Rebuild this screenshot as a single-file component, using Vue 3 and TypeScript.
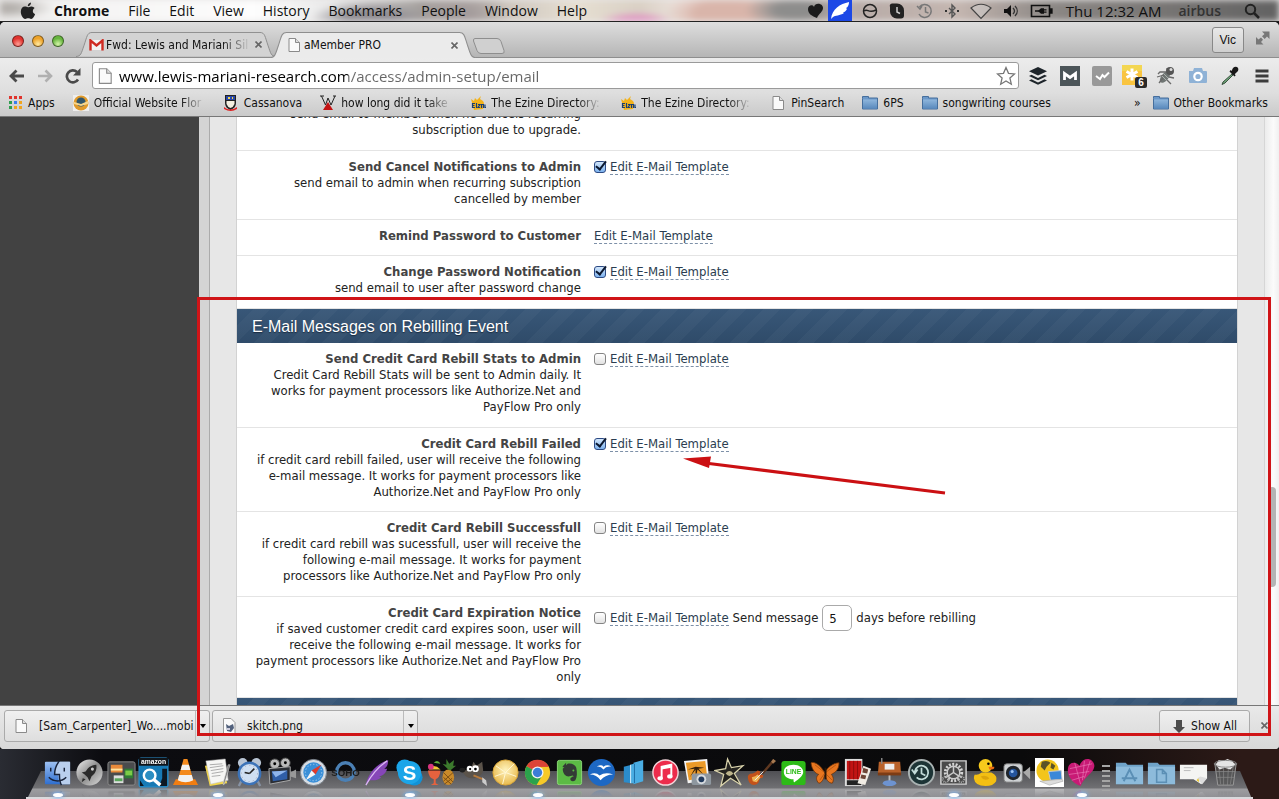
<script setup lang="ts">
import { reactive, ref } from 'vue'

interface Setting {
  id: string
  title: string
  note: string
  enabled?: boolean
  compact?: boolean
}

const menus = ['Chrome', 'File', 'Edit', 'View', 'History', 'Bookmarks', 'People', 'Window', 'Help']

const address = ref('www.lewis-mariani-research.com/access/admin-setup/email')

const general = reactive<Setting[]>([
  { id: 'upgrade', title: 'Send Cancel Notifications to User', note: 'send email to member when he cancels recurring\nsubscription due to upgrade.', enabled: true },
  { id: 'cancel', title: 'Send Cancel Notifications to Admin', note: 'send email to admin when recurring subscription\ncancelled by member', enabled: true },
  { id: 'remind', title: 'Remind Password to Customer', note: '', compact: true },
  { id: 'change', title: 'Change Password Notification', note: 'send email to user after password change', enabled: true },
])

const rebilling = reactive<Setting[]>([
  { id: 'stats', title: 'Send Credit Card Rebill Stats to Admin', note: 'Credit Card Rebill Stats will be sent to Admin daily. It\nworks for payment processors like Authorize.Net and\nPayFlow Pro only', enabled: false },
  { id: 'failed', title: 'Credit Card Rebill Failed', note: 'if credit card rebill failed, user will receive the following\ne-mail message. It works for payment processors like\nAuthorize.Net and PayFlow Pro only', enabled: true, compact: true },
  { id: 'success', title: 'Credit Card Rebill Successfull', note: 'if credit card rebill was sucessfull, user will receive the\nfollowing e-mail message. It works for payment\nprocessors like Authorize.Net and PayFlow Pro only', enabled: false },
  { id: 'expire', title: 'Credit Card Expiration Notice', note: 'if saved customer credit card expires soon, user will\nreceive the following e-mail message. It works for\npayment processors like Authorize.Net and PayFlow Pro\nonly', enabled: false },
])

const days = ref('5')
</script>

<template>
  <div class="desktop">
    <svg class="defs" width="0" height="0" aria-hidden="true">
      <defs>
        <linearGradient id="folder" x1="0" y1="0" x2="0" y2="1"><stop offset="0" stop-color="#8fb6dc" /><stop offset="1" stop-color="#5a8abd" /></linearGradient>
        <linearGradient id="bluebox" x1="0" y1="0" x2="0" y2="1"><stop offset="0" stop-color="#9cc0f2" /><stop offset="1" stop-color="#2f6fd0" /></linearGradient>
        <linearGradient id="steel" x1="0" y1="0" x2="1" y2="1"><stop offset="0" stop-color="#f2f2f2" /><stop offset=".5" stop-color="#8c8c8c" /><stop offset="1" stop-color="#dcdcdc" /></linearGradient>
        <radialGradient id="gold" cx=".5" cy=".4" r=".6"><stop offset="0" stop-color="#fff3bd" /><stop offset="1" stop-color="#e8b94c" /></radialGradient>
        <symbol id="doc" viewBox="0 0 16 16"><path d="M3 1.500h6.500l4 4v9H3z" fill="#fafafa" stroke="#8a8a8a" /><path d="M9.500 1.500v4h4" fill="#ddd" stroke="#8a8a8a" /></symbol>
        <symbol id="fold" viewBox="0 0 16 16"><path d="M.5 3.500v-2h6v1.500h9v11H.5z" fill="#6b98c9" stroke="#466f9d" /><path d="M1 4.500h14v9H1z" fill="url(#folder)" /></symbol>
        <symbol id="ezine" viewBox="0 0 16 16"><path d="M1 4l3 2 1-3 2 2 4-4-1 3 3 2 1 2-1 6-9 1z" fill="#f3b21a" /><path d="M2.500 8v5M2.500 8.500h2.500M2.500 10.500h2M2.500 12.500h2.500M6.500 8v5M8 9.500h2l-2 3h2M11.500 13V9.500h2V13M15 9.500v3h1" fill="none" stroke="#173f75" stroke-width="1.200" /></symbol>
      </defs>
    </svg>

    <header class="menubar">
      <div class="wallpaper" />
      <button class="apple" aria-label="Apple menu">
        <svg viewBox="0 0 16 18" width="16" height="18"><path d="M11 .5c.1 1.900-1.300 3.700-3.200 3.800C7.600 2.500 9.200.8 11 .5zM8 5.200c.9 0 1.900-.9 3.500-.8 1.300.1 2.400.7 3.100 1.700-2.600 1.700-2.200 5 .5 6.100-.7 2-2.200 4.700-3.900 4.700-1.200 0-1.600-.7-3-.7s-1.900.7-3 .7C3 16.900.8 12.900.8 9.700c0-3.300 2-5.200 4-5.200 1.400 0 2.400.7 3.200.7z" fill="#222" /></svg>
      </button>
      <nav class="menus"><button v-for="m in menus" :key="m">{{ m }}</button></nav>
      <div class="status">
        <svg width="18" height="20" viewBox="0 0 18 20"><path d="M2 8c0-4 5-5 6-2 1-5 9-4 9 1 0 4-4 5-6 10C6 15 2 13 2 8z" fill="#1b1b1b" /></svg>
        <svg class="quill" width="24" height="22" viewBox="0 0 24 22"><path d="M0 0h24v22H0z" fill="#1c48e6" /><path d="M3 19C4 9 12 4 21 2c0 5-3 6-3 6l1 1c-2 4-4 3-4 3l1 1c-4 3-9 2-11 4z" fill="#fff" /></svg>
        <svg width="16" height="16" viewBox="0 0 16 16"><circle cx="8" cy="8" r="6.500" fill="none" stroke="#222" stroke-width="1.500" /><path d="M2 8c4-3 4 3 12-1" fill="none" stroke="#222" stroke-width="1.500" /></svg>
        <svg width="18" height="16" viewBox="0 0 18 16"><path d="M4 .5h5a7 7 0 0 1 7 7v5q0 3-3 3H9a7 7 0 0 1-7-7V4Q1 1 4 .5z" fill="#222" /><path d="M9 4v5l3 1.500" fill="none" stroke="#ccc" stroke-width="1.500" /></svg>
        <svg width="18" height="16" viewBox="0 0 18 16"><path d="M3.500 4A6.500 6.500 0 1 1 3 11M1 3l3 3 2-3M9.500 4v5l3 1" fill="none" stroke="#777" stroke-width="1.500" /></svg>
        <svg width="16" height="16" viewBox="0 0 16 16"><path d="M5 5l6 6-3 3V2l3 3-6 6" fill="none" stroke="#555" stroke-width="1.400" /><path d="M1 8h2M13 8h2" stroke="#333" stroke-width="2" /></svg>
        <svg width="22" height="18" viewBox="0 0 22 18"><path d="M1 6c6-5 14-5 20 0L11 16.500z" fill="#ddd" fill-opacity=".4" stroke="#444" stroke-width="1.200" /></svg>
        <svg width="18" height="16" viewBox="0 0 18 16"><path d="M2 6h3l4-4v12l-4-4H2z" fill="#111" /><path d="M11 5c2 2 2 4 0 6M13 3c3 3 3 7 0 10" fill="none" stroke="#333" stroke-width="1.300" /></svg>
        <svg width="24" height="16" viewBox="0 0 24 16"><path d="M1.500 2.500h18v11h-18z" fill="none" stroke="#111" stroke-width="1.600" /><path d="M20.500 6h1.500v4h-1.500zM5 8h4M14 6.800h2.500M14 9.200h2.500" stroke="#111" fill="#111" stroke-width="1.300" /><path d="M8 8l3-2.700h3v5.400h-3z" fill="#111" /></svg>
      </div>
      <time class="clock">Thu 12:32 AM</time>
      <span class="user">airbus</span>
      <button class="spot" aria-label="Search"><svg width="16" height="16" viewBox="0 0 16 16"><circle cx="6.500" cy="6.500" r="4.700" fill="none" stroke="#222" stroke-width="2" /><path d="M10 10l5 5" stroke="#222" stroke-width="2.500" /></svg></button>
    </header>

    <main class="browser">
      <div class="tabstrip">
        <div class="lights">
          <button class="light red" aria-label="Close window" /><button class="light amber" aria-label="Minimise window" /><button class="light green" aria-label="Zoom window" />
        </div>
        <div class="tab">
          <svg class="shape" viewBox="0 0 200 26" preserveAspectRatio="none"><path d="M0 25.500C5 25 5 23 8 14S11 .5 16 .5h168c5 0 5 4.500 8 13.500s3 11 8 11.500" fill="#d3d3d3" stroke="#8e8e8e" /></svg>
          <svg width="15" height="12" viewBox="0 0 15 12"><path d="M1 1h13v10H1z" fill="#f3f3f3" /><path d="M1.500 11.500V1.500l6 5 6-5v10" fill="none" stroke="#cf2b22" stroke-width="2.400" /></svg>
          <span class="tabname fade">Fwd: Lewis and Mariani Sil</span>
          <button class="x" aria-label="Close tab"><svg width="7" height="7" viewBox="0 0 7 7"><path d="M.5.5l6 6M6.500.5l-6 6" stroke="#666" stroke-width="1.600" /></svg></button>
        </div>
        <div class="tab active">
          <svg class="shape" viewBox="0 0 200 26" preserveAspectRatio="none"><path d="M0 26C5 25 5 23 8 14S11 .5 16 .5h168c5 0 5 4.500 8 13.500s3 11 8 12" fill="#ebebeb" stroke="#8e8e8e" /></svg>
          <svg width="16" height="16"><use href="#doc" /></svg>
          <span class="tabname">aMember PRO</span>
          <button class="x" aria-label="Close tab"><svg width="7" height="7" viewBox="0 0 7 7"><path d="M.5.5l6 6M6.500.5l-6 6" stroke="#666" stroke-width="1.600" /></svg></button>
        </div>
        <button class="newtab" aria-label="New tab"><svg width="34" height="17" viewBox="0 0 34 17"><path d="M3 .5h22q3 0 4 3l3 9q1 3-2 3H9q-3 0-4-3L1.500 3Q1 .5 3 .5z" fill="#d0d0d0" stroke="#8e8e8e" /></svg></button>
        <button class="profile">Vic</button>
        <button class="full" aria-label="Full screen"><svg width="14" height="14" viewBox="0 0 14 14"><path d="M6 .5h7.500V8L11 5.500 8.700 8 6 5.300 8.500 3zM0 6v7.500h7.500L5 11l2-2.200L5 6.500 2.500 8.500z" fill="#777" /></svg></button>
      </div>

      <div class="toolbar">
        <button aria-label="Back"><svg width="18" height="16" viewBox="0 0 18 16"><path d="M16 8H3M8.500 2.500L3 8l5.500 5.500" fill="none" stroke="#4a4a4a" stroke-width="2.800" /></svg></button>
        <button aria-label="Forward"><svg width="18" height="16" viewBox="0 0 18 16"><path d="M2 8h13M9.500 2.500L15 8l-5.500 5.500" fill="none" stroke="#b0b0b0" stroke-width="2.600" /></svg></button>
        <button aria-label="Reload"><svg width="18" height="16" viewBox="0 0 18 16"><path d="M14 11.500A6 6 0 1 1 13 4" fill="none" stroke="#4a4a4a" stroke-width="2.700" /><path d="M16.500 0v7.500H9z" fill="#4a4a4a" /></svg></button>
        <label class="urlbox">
          <svg width="20" height="18" viewBox="0 0 16 16"><use href="#doc" /></svg>
          <input v-model="address" type="text" aria-label="Address">
          <svg width="20" height="20" viewBox="0 0 20 20"><path d="M10 1.500l2.500 5.800 6 .6-4.600 4.100 1.400 6.200L10 15l-5.300 3.200L6.100 12 1.500 7.900l6-.6z" fill="#fff" stroke="#777" stroke-width="1.300" /></svg>
        </label>
        <div class="exts">
          <button aria-label="Buffer"><svg width="20" height="20" viewBox="0 0 20 20"><path d="M10 1l9 4.300-9 4.300-9-4.300z" fill="#1e252b" /><path d="M1 10l2.500-1.200L10 12l6.500-3.200L19 10l-9 4.300zM1 14.500l2.500-1.200 6.500 3.200 6.500-3.200 2.500 1.200-9 4.300z" fill="#1e252b" /></svg></button>
          <button aria-label="Gmail extension"><svg width="20" height="20" viewBox="0 0 20 20"><path d="M0 0h20v20H0z" fill="#4c5559" /><path d="M4.500 14V7.500l5.500 4 5.500-4V14" fill="none" stroke="#fff" stroke-width="2.800" /></svg></button>
          <button aria-label="Tasks"><svg width="20" height="20" viewBox="0 0 20 20"><rect width="20" height="20" rx="2" fill="#999" /><path d="M4 10l4 3 2.500-4 2 2L17 6.500" fill="none" stroke="#fff" stroke-width="2" /></svg></button>
          <button aria-label="Notes"><svg width="26" height="24" viewBox="0 0 26 24"><path d="M1 1h20v20H1z" fill="#f9c440" /><path d="M1 1h20v6H1z" fill="#f3d652" /><path d="M11 4.500v12M5.500 7.500l11 6M16.500 7.500l-11 6" stroke="#fff" stroke-width="3" /><rect x="14" y="13" width="12" height="11" rx="2" fill="#2a2a2a" /><text x="20" y="22" text-anchor="middle" font-family="Liberation Sans" font-size="10" font-weight="bold" fill="#fff">6</text></svg></button>
          <button aria-label="Bug reporter"><svg width="20" height="20" viewBox="0 0 20 20"><ellipse cx="9" cy="11" rx="3.500" ry="7" transform="rotate(40 9 11)" fill="#6f7573" /><path d="M5 9l5 5M7 7l5 5" stroke="#aab0ac" /><path d="M10 6L4 6 2 8M8 9l-7 2M7 12l-4 5M12 8l-1-6M13 11l5 1M11 14l4 4" fill="none" stroke="#6a6a6a" stroke-width="1.300" /><circle cx="14" cy="5" r="4" fill="#555" /><circle cx="15" cy="3.500" r="1.500" fill="#ddd" /></svg></button>
          <button aria-label="Capture"><svg width="20" height="18" viewBox="0 0 20 18"><path d="M1 4h4l1-3h8l1 3h3q1 0 1 1v10q0 1-1 1H2q-1 0-1-1z" fill="#8fb2d6" /><circle cx="10" cy="9.500" r="3.700" fill="none" stroke="#fff" stroke-width="2.200" /></svg></button>
          <button aria-label="Colour picker"><svg width="20" height="20" viewBox="0 0 20 20"><path d="M12 8l1 1-8 8-3 1.500L3 16z" fill="#6fa57a" stroke="#39513e" /><path d="M9.500 5.500l5 5 1.200-1.200-1-1L18 5q1-3-1-4t-4 1l-1.500 3-1-1z" fill="#181818" /></svg></button>
          <button aria-label="Menu"><svg width="14" height="14" viewBox="0 0 14 14"><path d="M.5 2h13M.5 7h13M.5 12h13" stroke="#3c3c3c" stroke-width="2.800" /></svg></button>
        </div>
      </div>

      <nav class="bookmarks">
        <a href="#"><svg width="14" height="14" viewBox="0 0 14 14"><path d="M0 0h3v3H0zM5 0h3v3H5z" fill="#e0332c" /><path d="M10 0h3v3h-3z" fill="#e0332c" /><path d="M0 5h3v3H0z" fill="#2f9e4f" /><path d="M5 5h3v3H5z" fill="#3b7ded" /><path d="M10 5h3v3h-3z" fill="#f0a41e" /><path d="M0 10h3v3H0z" fill="#2f9e4f" /><path d="M5 10h3v3H5zM10 10h3v3h-3z" fill="#f0a41e" /></svg><span>Apps</span></a>
        <a href="#"><svg width="16" height="16" viewBox="0 0 16 16"><path d="M0 0h16v16H0z" fill="#eee" /><circle cx="8" cy="8" r="7.500" fill="#e09a2b" /><circle cx="8" cy="7" r="4.500" fill="#31566b" /><path d="M1 7l7 2 7-3v3l-7 2-7-2z" fill="#f6d58b" /></svg><span class="cut">Official Website Flor</span></a>
        <a href="#"><svg width="16" height="16" viewBox="0 0 16 16"><path d="M2 0h11v8q0 5-5.500 7Q2 13 2 8z" fill="#222" /><path d="M3 1h9v4H3z" fill="#2846a8" /><path d="M3.500 6h8v3q-1 3-4 4-3-1-4-4z" fill="#f3efe0" /><path d="M5 2h2v2H5zM9 2h1v2H9z" fill="#f3d84a" /><path d="M1 12q6 5 13 0v2q-6 4-13 0z" fill="#d22" /></svg><span>Cassanova</span></a>
        <a href="#"><svg width="16" height="16" viewBox="0 0 16 16"><path d="M0 1h4M1.500 1l4 9L8 3l3 7 4-9M13 1h3" fill="none" stroke="#222" /><path d="M8 7l5 8H3z" fill="#c41414" /></svg><span class="cut">how long did it take</span></a>
        <a href="#"><svg width="16" height="16"><use href="#ezine" /></svg><span class="cut">The Ezine Directory:</span></a>
        <a href="#"><svg width="16" height="16"><use href="#ezine" /></svg><span class="cut">The Ezine Directory:</span></a>
        <a href="#"><svg width="16" height="16"><use href="#doc" /></svg><span>PinSearch</span></a>
        <a href="#"><svg width="16" height="16"><use href="#fold" /></svg><span>6PS</span></a>
        <a href="#"><svg width="16" height="16"><use href="#fold" /></svg><span>songwriting courses</span></a>
        <button class="more" aria-label="More bookmarks">»</button>
        <a href="#"><svg width="16" height="16"><use href="#fold" /></svg><span>Other Bookmarks</span></a>
      </nav>

      <div class="viewport">
        <div class="side" />
        <div class="gutter" />
        <div class="page">
          <form class="panel" @submit.prevent>
            <div v-for="s in general" :key="s.id" class="row" :class="{ compact: s.compact }">
              <label class="label" :for="s.id"><strong>{{ s.title }}</strong><span>{{ s.note }}</span></label>
              <div class="control">
                <input v-if="s.enabled !== undefined" :id="s.id" v-model="s.enabled" type="checkbox">
                <a href="#">Edit E-Mail Template</a>
              </div>
            </div>
            <h2>E-Mail Messages on Rebilling Event</h2>
            <div v-for="s in rebilling" :key="s.id" class="row" :class="{ compact: s.compact }">
              <label class="label" :for="s.id"><strong>{{ s.title }}</strong><span>{{ s.note }}</span></label>
              <div class="control">
                <input :id="s.id" v-model="s.enabled" type="checkbox">
                <a href="#">Edit E-Mail Template</a>
                <template v-if="s.id === 'expire'">
                  <label for="days">Send message</label>
                  <input id="days" v-model="days" class="days" type="text">
                  <span>days before rebilling</span>
                </template>
              </div>
            </div>
            <h2 aria-hidden="true" />
          </form>
        </div>
        <div class="scroll"><div class="thumb" /></div>
      </div>

      <footer class="downloads">
        <div class="dl">
          <button class="file"><svg width="16" height="18"><use href="#doc" /></svg><span>[Sam_Carpenter]_Wo....mobi</span></button>
          <button class="drop" aria-label="Options for file"><svg width="6" height="4" viewBox="0 0 6 4"><path d="M0 0h6L3 4z" /></svg></button>
        </div>
        <div class="dl">
          <button class="file"><svg width="16" height="18" viewBox="0 0 16 18"><path d="M2.500 1.500H10l4 4v11H2.500z" fill="#fafafa" stroke="#999" /><path d="M5 7l3 2 4-2 1 4-3 4-4-1z" fill="#52617c" /><path d="M6 11h3v2H6z" fill="#ccd" /></svg><span>skitch.png</span></button>
          <button class="drop" aria-label="Options for file"><svg width="6" height="4" viewBox="0 0 6 4"><path d="M0 0h6L3 4z" /></svg></button>
        </div>
        <button class="showall"><svg width="12" height="13" viewBox="0 0 12 13"><path d="M3 0h6v7h3l-6 6-6-6h3z" fill="#4c4c4c" /></svg>Show All</button>
        <button class="x" aria-label="Close downloads"><svg width="7" height="7" viewBox="0 0 7 7"><path d="M.5.5l6 6M6.500.5l-6 6" stroke="#666" stroke-width="1.600" /></svg></button>
      </footer>
    </main>

    <div class="dock">
      <div class="shelf" /><div class="lip" />
      <div class="icons">
        <button class="running" aria-label="Finder"><svg viewBox="0 0 32 32"><rect x="3" y="5" width="26" height="23" rx="1" fill="url(#bluebox)" /><path d="M17 5h12v23H19c-2-4-2-6-2-10h-4c0-5 1-9 4-13z" fill="#b9cfee" /><path d="M18 4c-4 5-5 9-5 14h5c0 4 0 7 2 11M7 21c5 5 13 5 18 0M9 11v4M23 11v4" fill="none" stroke="#18233a" stroke-width="1.500" /></svg></button>
        <button aria-label="Launchpad"><svg viewBox="0 0 32 32"><circle cx="16" cy="16" r="13.500" fill="url(#steel)" /><path d="M23 8c-6 0-9 4-11 7l-4 1 3 2 3 3 2 4 2-5c3-2 6-6 5-12zM9 22l3 1-4 3z" fill="#2b2b2b" /><circle cx="19" cy="12.500" r="1.600" fill="#ccc" /></svg></button>
        <button aria-label="Mission Control"><svg viewBox="0 0 32 32"><rect x="2" y="5" width="28" height="24" rx="2" fill="#4a4b4d" stroke="#8a8a8a" /><path d="M5 8h12v8H5z" fill="#e88a3a" /><path d="M5 12h12v2H5z" fill="#ffe5a0" /><path d="M19 12h9v10h-9z" fill="#2f7d35" /><path d="M20 14h7v5h-7z" fill="#7ccc48" /><path d="M8 19h10v8H8z" fill="#ddd" /><path d="M9 22h8v3H9z" fill="#58a55a" /></svg></button>
        <button aria-label="Amazon search"><svg viewBox="0 0 32 32"><rect x="1" y="1" width="30" height="30" rx="2" fill="#177ab5" stroke="#2b94d2" /><path d="M1 1h30v8H1z" fill="#101418" /><path d="M25 12h5v18h-8l3-8zM2 24l4 6H2z" fill="#0d1822" /><text x="16" y="7.500" text-anchor="middle" font-family="Liberation Sans" font-size="7" font-weight="bold" fill="#fff">amazon</text><circle cx="12" cy="19" r="6" fill="#2c8ec2" stroke="#fff" stroke-width="2.500" /><path d="M16 23l7 6" stroke="#fff" stroke-width="3.500" /></svg></button>
        <button aria-label="VLC"><svg viewBox="0 0 32 32"><path d="M6 23h20l3 6H3z" fill="#f07d12" /><path d="M14 2h4l6 22q-8 4-16 0z" fill="#f48a1c" /><path d="M12.500 8h7l1.500 5.500H11zM9.500 18.500h13L24 24q-8 4-16 0z" fill="#f1f1f1" /></svg></button>
        <button class="running" aria-label="TextEdit"><svg viewBox="0 0 32 32"><path d="M3 9l18-2 5 20-18 3z" fill="#f2d64b" /><path d="M4 4l20-2 3 22-18 4z" fill="#f6f6f4" stroke="#bbb" stroke-width=".5" /><path d="M8 8l13-1M8 11l14-2M9 14l13-2M10 17l12-2M10 20l9-1" stroke="#aaa" /><path d="M29 8l-6 20-1 1V26l5-18z" fill="#777" stroke="#ddd" stroke-width=".6" /></svg></button>
        <button aria-label="Alarm clock"><svg viewBox="0 0 32 32"><circle cx="9" cy="6" r="5" fill="#b8c4d4" /><circle cx="23" cy="6" r="5" fill="#b8c4d4" /><path d="M8 24l-3 6M24 24l3 6" stroke="#8793a5" stroke-width="2.500" /><circle cx="16" cy="17" r="11" fill="#cfdff2" stroke="#3c73b8" stroke-width="2.500" /><path d="M16 17l5-5M16 17l-5-1" stroke="#222" stroke-width="1.600" /><circle cx="16" cy="17" r="8.500" fill="none" stroke="#99a" stroke-dasharray="1 3.400" /></svg></button>
        <button aria-label="Video editor"><svg viewBox="0 0 32 32"><circle cx="9" cy="7" r="5" fill="#bbb" stroke="#444" /><circle cx="20" cy="6" r="5" fill="#bbb" stroke="#444" /><circle cx="9" cy="7" r="1.500" /><circle cx="20" cy="6" r="1.500" /><path d="M3 12l22-2v14L4 28z" fill="#2a2d33" stroke="#aaa" /><path d="M6 15l16-1v9L7 25z" fill="#2f5ea8" /><path d="M6 15l16-1-12 7z" fill="#8fb5ec" /><path d="M25 16l6-3v9l-6-2z" fill="#999" /></svg></button>
        <button aria-label="Safari"><svg viewBox="0 0 32 32"><circle cx="16" cy="16" r="13.500" fill="#d8dde3" stroke="#7b838c" /><circle cx="16" cy="16" r="10.500" fill="#3a8fd8" /><circle cx="16" cy="16" r="8.500" fill="none" stroke="#cfe4f7" stroke-dasharray="1 2.300" /><path d="M24 8l-6 10-4-4z" fill="#e03a2b" /><path d="M8 24l6-10 4 4z" fill="#f5f5f5" /></svg></button>
        <button aria-label="SOHO"><svg viewBox="0 0 32 32"><circle cx="16" cy="15" r="9" fill="none" stroke="#4b80b5" stroke-width="3.500" /><text x="16" y="20" text-anchor="middle" font-family="Liberation Sans" font-size="10" font-weight="bold" fill="#1c1c1c">SOHO</text></svg></button>
        <button aria-label="Quill"><svg viewBox="0 0 32 32"><path d="M4 29C6 17 15 7 27 3c0 6-2 8-4 9l3 0c-2 6-6 8-9 8l3 1c-4 4-9 3-12 3z" fill="#8646b8" /><path d="M4 29C10 18 17 10 26 4" fill="none" stroke="#dbb8f2" stroke-width="1.300" /></svg></button>
        <button class="running" aria-label="Skype"><svg viewBox="0 0 32 32"><circle cx="11" cy="11" r="8.500" fill="#1aa6ea" /><circle cx="21" cy="21" r="8.500" fill="#1292d6" /><circle cx="16" cy="16" r="12" fill="#1ba5e8" /><text x="16" y="23.500" text-anchor="middle" font-family="Liberation Sans" font-size="21" font-weight="bold" fill="#fff">S</text></svg></button>
        <button aria-label="Tropical drink"><svg viewBox="0 0 32 32"><ellipse cx="23" cy="21" rx="6" ry="8" fill="#c98a2a" /><path d="M18 16l10 10M18 21l8 7M28 16l-10 9M27 22l-8 6" stroke="#7c4d12" /><path d="M23 13l-6-6 4 1 0-6 3 5 5-4-1 6 3 0-6 5z" fill="#3c7a2d" /><path d="M2 14h13q-1 8-5 9v4l3 2H5l3-2v-4q-5-1-6-9z" fill="#e6623e" /><path d="M3 11q6-4 12 2H3z" fill="#f2c735" /><circle cx="5" cy="10" r="3" fill="#d8347f" /><path d="M8 6q4-4 7 1z" fill="#5cae3a" /></svg></button>
        <button aria-label="GIMP"><svg viewBox="0 0 32 32"><path d="M2 14c6 1 8-2 12-4l2-5 3 4 6-4 1 9c-2 9-16 11-20 3z" fill="#5b534a" /><ellipse cx="4.500" cy="13.500" rx="3" ry="2.500" fill="#1e1e1e" /><circle cx="12" cy="12" r="3" fill="#fff" /><circle cx="18" cy="12" r="3.500" fill="#fff" /><circle cx="12.500" cy="12.500" r="1.200" /><circle cx="18" cy="12.500" r="1.400" /><path d="M16 19l10 4" stroke="#b77b3c" stroke-width="2" /><path d="M25 21l4 3 1 6-5-4z" fill="#ccc" /></svg></button>
        <button aria-label="Orange slice"><svg viewBox="0 0 32 32"><circle cx="16" cy="16" r="13" fill="url(#gold)" stroke="#d9a63a" /><path d="M16 16L6 9M16 16l9-9M16 16l11 4M16 16l-3 12M16 16L5 20" stroke="#fff7d5" /></svg></button>
        <button class="running" aria-label="Chrome"><svg viewBox="0 0 32 32"><circle cx="16" cy="16" r="13" fill="#f6c928" /><path d="M16 16L4.700 9.500A13 13 0 0 1 27.300 9.500z" fill="#dc4437" /><path d="M16 16L4.700 9.500A13 13 0 0 0 15 29l6.500-11z" fill="#2ba24c" /><path d="M16 10h11.500L21 18z" fill="#f6c928" /><path d="M16 10h11.500l-1-2H9z" fill="#dc4437" /><circle cx="16" cy="16" r="6.200" fill="#f2f2f2" /><circle cx="16" cy="16" r="4.800" fill="#3b7dd8" /></svg></button>
        <button aria-label="Evernote"><svg viewBox="0 0 32 32"><rect x="3.500" y="3.500" width="25" height="25" rx="2" fill="#5cbb45" stroke="#8bd878" /><path d="M9 12l5-5c4-1 8 1 9 4 1 5 1 10-1 13-2 2-6 1-5-2 1-2 3-1 3-2 0-2-3 0-5 0-3 0-6-3-6-8z" fill="#343b36" /><path d="M9 10.500V9.500l3.500-3.500v4z" fill="#343b36" /><circle cx="20" cy="14" r="1" fill="#5cbb45" /></svg></button>
        <button aria-label="OpenOffice"><svg viewBox="0 0 32 32"><circle cx="16" cy="16" r="14" fill="#1d68c4" /><path d="M11 10q5-3 7 0 4-3 8 0-5-1-8 3-3-4-7-3zM4 18q6-3 10 1 6-4 14-1-8 0-13 6-4-6-11-6z" fill="#fff" /></svg></button>
        <button aria-label="Binders"><svg viewBox="0 0 32 32"><path d="M6 10l8-2v19l-8-1z" fill="#2b8ccb" /><path d="M13 8l3-1v20h-3zM16 6l10-3v22l-10 3z" fill="#4aade3" /><path d="M13 8v19" stroke="#d9eefa" /><path d="M17 7v20" stroke="#1e6ea6" /></svg></button>
        <button aria-label="iTunes"><svg viewBox="0 0 32 32"><circle cx="16" cy="16" r="13" fill="#ed2c4c" stroke="#f3d5da" stroke-width="1.500" /><path d="M12 22V10l10-2v12" fill="none" stroke="#fff" stroke-width="2" /><path d="M12 10l10-2v3l-10 2z" fill="#fff" /><ellipse cx="10.500" cy="22" rx="2.800" ry="2.200" fill="#fff" /><ellipse cx="20.500" cy="20" rx="2.800" ry="2.200" fill="#fff" /></svg></button>
        <button aria-label="iPhoto"><svg viewBox="0 0 32 32"><path d="M2 4l24-2 2 22-22 3z" fill="#f4f4f4" /><path d="M4 6l20-2 2 17-19 3z" fill="#eb9a28" /><path d="M14 10l-8 3 7-1-5 9 6-8v10l2-10 7 6-6-7 6-1z" fill="#34200c" /><rect x="10" y="17" width="20" height="12" rx="2" fill="#8e979f" /><circle cx="20" cy="23" r="5" fill="#d6dade" /><circle cx="20" cy="23" r="3" fill="#223b5d" /></svg></button>
        <button aria-label="iMovie"><svg viewBox="0 0 32 32"><path d="M14 2l4 9 12-2-9 8 7 12-11-7-10 8 3-12L1 14l11-2z" fill="#24231f" stroke="#d9d3ac" stroke-width="1.300" /><path d="M12 17q4-5 8 0-4 5-8 0z" fill="#bdb48b" /></svg></button>
        <button aria-label="GarageBand"><svg viewBox="0 0 32 32"><path d="M17 17L29 3" stroke="#5f3820" stroke-width="2.500" /><path d="M26 5l2-3 3 2-3 3z" fill="#a77a50" /><path d="M2 22q-1-5 5-5 3-1 5-3l3 1-1 2 4 2q0 3-4 3 0 7-6 7-5 0-6-7z" fill="#c4521a" /><path d="M6 21q4-1 6-3l3 3-4 5-4-1z" fill="#f0b454" /><path d="M9 24l9-9" stroke="#eee" /></svg></button>
        <button aria-label="LINE"><svg viewBox="0 0 32 32"><rect x="3.500" y="4" width="25" height="25" rx="3" fill="#2dbb17" /><path d="M16 8c6 0 10 3.500 10 7.500 0 4-5 7.500-9 10.500-1 .5-1-2-1-3-6 0-10-3-10-7.500S10 8 16 8z" fill="#fff" /><text x="16" y="18" text-anchor="middle" font-family="Liberation Sans" font-size="7" font-weight="bold" fill="#2dbb17">LINE</text></svg></button>
        <button aria-label="Butterfly"><svg viewBox="0 0 32 32"><path d="M15 16C9 5 2 5 1 6c1 8 5 11 8 12-3 2-3 6 0 9 3 0 5-4 6-8 2 4 4 8 8 8 2-3 1-7-1-9 4-2 8-5 8-12-6 0-12 5-15 10z" fill="#e8761f" stroke="#6f3208" stroke-width=".8" /><path d="M15 16L5 8M15 17l-5 7M16 16l11-8M17 18l6 6" stroke="#a9520f" stroke-width=".8" /><path d="M16 11v12" stroke="#2a1708" stroke-width="2" /></svg></button>
        <button aria-label="Photo Booth"><svg viewBox="0 0 32 32"><path d="M3 2h18v28H3z" fill="#ddd" /><path d="M5 4h15v19H5z" fill="#c11414" /><path d="M8 4v19M12 4v19M16 4v19" stroke="#8f0d0d" /><path d="M5 24h15v5H5z" fill="#222" /><path d="M22 9l8 3-6 17-8-2z" fill="#f1ece4" /><path d="M22 11l5 2-1 4-5-1zM20 18l5 1-1 4-5-1z" fill="#6e4637" /></svg></button>
        <button aria-label="Keynote"><svg viewBox="0 0 32 32"><path d="M15 18h2v9h-2z" fill="#bbb" /><ellipse cx="16" cy="27" rx="7" ry="3" fill="#6d93d0" /><path d="M5 5h22l1 13H4z" fill="#b9622a" /><path d="M4 16h24v3H4z" fill="#7d3c14" /><path d="M11 7h10v6H11z" fill="#eee" /><path d="M8 1v6" stroke="#888" stroke-width="1.500" /></svg></button>
        <button aria-label="Time Machine"><svg viewBox="0 0 32 32"><circle cx="16" cy="16" r="13" fill="#1d3436" stroke="#a9b2b2" stroke-width="2" /><path d="M9 15a7 7 0 1 1 2 6M6 13l3 4 3-4M16 11v6l4 2" fill="none" stroke="#c4dcda" stroke-width="1.800" /></svg></button>
        <button class="running" aria-label="System Preferences"><svg viewBox="0 0 32 32"><path d="M3 4h26v24H3z" fill="#4a4a4a" stroke="#d2d2d2" stroke-width="1.500" /><circle cx="16" cy="16" r="8.500" fill="none" stroke="#d5d5d5" stroke-width="3" stroke-dasharray="2 1.500" /><circle cx="16" cy="16" r="6.500" fill="none" stroke="#ccc" stroke-width="1.500" /><path d="M16 16V9M16 16l-6 4M16 16l6 4" stroke="#ccc" stroke-width="1.500" /><circle cx="8" cy="23" r="3" fill="none" stroke="#aaa" stroke-width="2" stroke-dasharray="1 1" /><circle cx="24" cy="23" r="3" fill="none" stroke="#aaa" stroke-width="2" stroke-dasharray="1 1" /></svg></button>
        <button aria-label="Duck"><svg viewBox="0 0 32 32"><circle cx="16" cy="9" r="7" fill="#f6c91c" /><path d="M5 18q3 1 7-2h10q7 3 5 9-3 5-11 5-11 0-12-8 0-3 1-4z" fill="#f3bf13" /><path d="M19 10h6q1 3-5 3z" fill="#ea6d12" /><circle cx="19" cy="7" r="1.300" /><path d="M11 20q6-2 9 2-5 4-9-2z" fill="#dca50c" /></svg></button>
        <button aria-label="FaceTime"><svg viewBox="0 0 32 32"><rect x="2" y="7" width="19" height="19" rx="3" fill="#cfd2d4" stroke="#777" /><path d="M22 16l7-6v13z" fill="#aaa" /><circle cx="11.500" cy="16.500" r="7.500" fill="#20252b" /><circle cx="11.500" cy="16.500" r="4.500" fill="#24549c" /><circle cx="10.500" cy="15" r="1.600" fill="#9fc5f5" /></svg></button>
        <button aria-label="Network"><svg viewBox="0 0 32 32"><path d="M1 1h30v30H1z" fill="#fff" /><circle cx="14" cy="14" r="11.500" fill="#f3c51b" /><path d="M8 5q6-2 9 1l-4 4-2 4-4-4zM18 6l4 3-2 4-3-2z" fill="#5b5328" /><path d="M15 15l13-1 1 9-12 1z" fill="#3b88d8" stroke="#ccc" /><path d="M16 24l13-1 1 2-14 4-10-4z" fill="#ddd" stroke="#999" stroke-width=".5" /></svg></button>
        <button class="running" aria-label="Skitch"><svg viewBox="0 0 32 32"><path d="M15 30C6 27 1 19 2 12 3 5 10 4 14 9c2-7 9-9 13-5 5 5 1 11-4 15-3 3-6 6-8 11z" fill="#c81a75" /><path d="M4 12l23-5M3 18l21-3M6 24l13-4M9 6l6 22M19 4l-2 20M25 4l-6 18" stroke="#ee86bd" stroke-width=".6" /></svg></button>
        <span class="sep" />
        <button aria-label="Applications"><svg viewBox="0 0 32 32"><path d="M2 8V6h10l2 2h16v20H2z" fill="#6fa3c8" /><path d="M2 10h28v18H2z" fill="#8dbbdb" /><path d="M10 25l6-12 6 12M8 22h16" fill="none" stroke="#5b8fb5" stroke-width="2" /></svg></button>
        <button aria-label="Documents"><svg viewBox="0 0 32 32"><path d="M2 8V6h10l2 2h16v20H2z" fill="#6fa3c8" /><path d="M2 10h28v18H2z" fill="#8dbbdb" /><path d="M11 13h6l4 4v9H11zM17 13v4h4" fill="none" stroke="#5b8fb5" stroke-width="1.600" /></svg></button>
        <button aria-label="Note"><svg viewBox="0 0 32 32"><path d="M2 8h28v14l-6 6-8-5H2z" fill="#f4f4f2" /><path d="M6 11h10M6 14h7" stroke="#bbb" /><path d="M20 22l5 6 5-6-7-2z" fill="#ddd" /><path d="M19 24l2-2 1 4z" fill="#e8c52f" /></svg></button>
        <button aria-label="Trash"><svg viewBox="0 0 32 32"><path d="M5 7h22l-3 22H8z" fill="#555" fill-opacity=".7" stroke="#999" /><path d="M9 10l2 18M14 11v18M19 11l-1 18M24 10l-3 18M6 15h20M7 21h18" stroke="#8a8a8a" stroke-width=".7" /><path d="M6 8l3-5 5 1 4-2 5 2 3 4-5 5-6-2-5 2z" fill="#e4e4e4" /><ellipse cx="16" cy="7" rx="11.500" ry="3.500" fill="none" stroke="#888" /></svg></button>
      </div>
    </div>

    <div class="callout" />
    <svg class="arrow" width="264" height="40" viewBox="0 0 264 40"><path d="M26 6.500L262 36" stroke="#cb1013" stroke-width="3.200" /><path d="M0 1.500L28-.5 26 11z" fill="#cb1013" /></svg>
  </div>
</template>

<style>
html, body { margin: 0; height: 100%; overflow: hidden; }
#app { height: 100%; }
</style>

<style scoped>
.desktop { position: relative; height: 100vh; display: flex; flex-direction: column; overflow: hidden; background: #131315; font: 12px/16px "DejaVu Sans Condensed", "DejaVu Sans", sans-serif; color: #111; }
.defs { position: absolute; }
* { box-sizing: border-box; }
svg { flex: none; display: block; }
button { border: 0; padding: 0; margin: 0; background: none; font: inherit; color: inherit; display: flex; align-items: center; }
a { color: inherit; text-decoration: none; }

.menubar { position: relative; height: 22px; flex: none; display: flex; align-items: center; border-bottom: 1px solid #222; overflow: hidden; background: #e9e7e6; font: 14px/20px "Open Sans", "Noto Sans", sans-serif; color: #111; }
.wallpaper { position: absolute; inset: 0; filter: blur(3px); background:
  radial-gradient(ellipse 40px 12px at 636px 24px, #e08cc0 50%, transparent),
  radial-gradient(ellipse 50px 26px at 460px 14px, #a39b9b 20%, transparent),
  radial-gradient(ellipse 60px 16px at 370px 18px, #8d8a90 40%, transparent),
  radial-gradient(ellipse 50px 12px at 5px 8px, #b0aca8 20%, transparent),
  radial-gradient(ellipse 50px 20px at 795px 10px, #8d8d8c 40%, transparent),
  radial-gradient(ellipse 60px 26px at 725px 14px, #d9b5aa 50%, transparent),
  linear-gradient(90deg, #f0efee 0, #fdfdfd 20%, #e8e8e8 26%, #a39f9c 33%, #cfc8c0 40%, #e6dfd2 45%, #d9d0c4 50%, #f0e6e2 54%, #e0c6bf 60%, #b8aca8 67%, #c4b6b0 75%, #8c8885 82%, #626262 100%); }
.menubar > :not(.wallpaper) { position: relative; }
.apple { margin-left: 20px; width: 34px; }
.menus { display: flex; gap: 19px; }
.menus button:first-child { font-weight: 700; }
.status { margin-left: auto; display: flex; align-items: center; gap: 10px; }
.status .quill { margin: 0 0 0 -6px; }
.clock { margin-left: 12px; font-size: 15px; }
.user { margin-left: 17px; font-weight: 600; color: #333; }
.spot { margin: 0 19px 0 23px; }

.browser { flex: 1; min-height: 0; display: flex; flex-direction: column; background: #e3e3e3; border-radius: 5px 5px 4px 4px; overflow: hidden; }
.tabstrip { height: 36px; flex: none; display: flex; align-items: flex-end; background: linear-gradient(#dedede, #b5b5b5); border-bottom: 1px solid #8e8e8e; }
.lights { display: flex; gap: 8px; padding: 0 12px 10px 12px; }
.light { width: 12px; height: 12px; border-radius: 50%; border: 1px solid rgba(0, 0, 0, .45); }
.red { background: radial-gradient(circle at 50% 80%, #ff9c93, #e0342f 60%); }
.amber { background: radial-gradient(circle at 50% 80%, #ffe9a0, #eda32a 60%); }
.green { background: radial-gradient(circle at 50% 80%, #d4f5a8, #67b53f 60%); }
.tab { position: relative; width: 200px; height: 25px; display: flex; align-items: center; gap: 2px; padding: 0 12px 0 13px; }
.tab.active { width: 206px; margin-left: -6px; padding: 0 16px; height: 26px; margin-bottom: -1px; }
.tab > :not(.shape) { position: relative; }
.shape { position: absolute; inset: 0; width: 100%; height: 100%; }
.tabname { flex: 1; min-width: 0; overflow: hidden; white-space: nowrap; }
.fade { -webkit-mask-image: linear-gradient(90deg, #000 80%, transparent); mask-image: linear-gradient(90deg, #000 80%, transparent); }
.x { padding: 2px; }
.newtab { align-self: center; margin: 14px 0 0 -4px; }
.profile { margin: 0 12px 4px auto; height: 26px; padding: 0 7px; border: 1px solid #888; border-radius: 3px; background: linear-gradient(#e8e8e8, #cfcfcf); font: 12px/16px "Liberation Sans", Arial, sans-serif; }
.full { margin: 0 9px 12px 0; }

.toolbar { flex: none; height: 35px; display: flex; align-items: center; background: linear-gradient(#ececec, #dedede); padding-left: 8px; }
.toolbar > button { width: 28px; }
.urlbox { flex: 1; min-width: 0; height: 27px; display: flex; align-items: center; gap: 4px; padding: 0 2px; border: 1px solid #9a9a9a; border-radius: 3px; background: #fff; }
.urlbox input { flex: 1; min-width: 0; border: 0; padding: 0; outline: 0; height: 22px; font: 15px/22px "Open Sans", "Noto Sans", sans-serif; color: transparent; background: linear-gradient(90deg, #000 229px, #666 229px); -webkit-background-clip: text; background-clip: text; }
.exts { display: flex; padding: 0 1px 0 3px; }
.exts button { width: 32px; height: 26px; justify-content: center; }

.bookmarks { flex: none; height: 24px; display: flex; align-items: center; gap: 18px; padding: 0 11px 3px 9px; background: linear-gradient(#dedede, #cacaca); border-bottom: 1px solid #777; white-space: nowrap; }
.bookmarks a { display: flex; align-items: center; gap: 5px; }
.cut { width: 111px; -webkit-mask-image: linear-gradient(90deg, #000 78%, transparent); mask-image: linear-gradient(90deg, #000 78%, transparent); }
.more { margin: 0 -6px 0 auto; }

.viewport { flex: 1; min-height: 0; display: flex; overflow: hidden; background: #fff; }
.side { width: 199px; background: #424242; }
.gutter { width: 11px; background: #d4d4d4; border-right: 1px solid #ababab; }
.page { flex: 1; min-width: 0; padding: 0 26px; background: #e7e7e7; border-right: 1px solid #d6d6d6; }
.panel { margin-top: -35px; background: #fff; border: solid #d2d2d2; border-width: 0 1px; font-size: 13px; }
.row { display: flex; gap: 13px; padding: 8px 0 12px; border-bottom: 1px solid #e4e4e4; }
.row.compact { padding-bottom: 11px; }
.label { width: 344px; flex: none; text-align: right; color: #222; }
.label strong { display: block; color: #444; }
.label span { display: block; white-space: pre; }
.control { display: flex; align-items: center; align-self: flex-start; gap: 4px; min-height: 16px; color: #222; }
.control a { color: #2b3d50; border-bottom: 1px dashed #7d90a8; line-height: 14px; }
.control input[type="checkbox"] { appearance: none; width: 12px; height: 12px; margin: 0; border: 1px solid #848484; border-radius: 3px; background: linear-gradient(#fff, #e2e2e2); }
.control input[type="checkbox"]:checked { position: relative; border-color: #2c4a84; background: linear-gradient(#d2e6fb, #7db2ee); }
.control input[type="checkbox"]:checked::after { content: ""; position: absolute; left: 3px; top: -3px; width: 4px; height: 9px; border: solid #0b1830; border-width: 0 2px 2px 0; transform: rotate(38deg); }
.control .days { width: 30px; height: 26px; margin: 0; padding: 0 6px; border: 1px solid #aaa; border-radius: 5px; background: #fff; font: 13px/16px "DejaVu Sans Condensed", sans-serif; color: #111; }
h2 { margin: 0; height: 34px; padding: 0 15px; font: 16px/35px "Liberation Sans", Arial, sans-serif; color: #fff; text-shadow: 0 1px 1px #1b2c40; background: repeating-linear-gradient(135deg, transparent 0 12px, rgba(255, 255, 255, .03) 12px 24px), linear-gradient(#385778, #2f4b69); }
.scroll { position: relative; width: 14px; background: linear-gradient(90deg, #ececec, #fbfbfb 60%, #f0f0f0); }
.thumb { position: absolute; right: 3px; top: 63%; width: 8px; height: 17%; border-radius: 4px; background: #b4b4b4; }

.downloads { flex: none; height: 44px; display: flex; align-items: flex-start; gap: 2px; padding: 4px 9px 0 4px; border-top: 1px solid #777; background: linear-gradient(#e9e9e9, #d8d8d8); }
.dl, .showall { height: 32px; border: 1px solid #aaa; border-radius: 3px; background: linear-gradient(#f0f0f0, #dedede); }
.dl { width: 206px; display: flex; }
.file { flex: 1; min-width: 0; gap: 10px; padding-left: 8px; white-space: nowrap; }
.drop { width: 14px; justify-content: center; border-left: 1px solid #bbb; }
.showall { margin-left: auto; padding: 0 12px 0 13px; gap: 6px; }
.downloads .x { margin: 10px 0 0 7px; }

.dock { position: relative; flex: none; height: 50px; background: linear-gradient(90deg, #2a2c33, #0c0c10 8%, #0a0a0b 80%, #2c1a17 97%); }
.shelf { position: absolute; inset: 22px 27px 0; clip-path: polygon(14px 0, calc(100% - 12px) 0, 100% 100%, 0 100%); background: linear-gradient(#505054, #707073 17px, #9d9da0 18px, #8e8e92); }
.lip { position: absolute; inset: auto 26px 0; height: 2px; background: #d9dadd; }
.icons { position: relative; display: flex; justify-content: center; padding: 8px 0 0 4px; }
.icons button { position: relative; width: 32px; height: 31px; justify-content: center; -webkit-box-reflect: below 0 linear-gradient(transparent 70%, rgba(255, 255, 255, .3)); }
.icons svg { width: 31px; height: 31px; }
.running::after { content: ""; position: absolute; left: 11px; top: 36px; width: 10px; height: 4px; border-radius: 50%; background: #fff; box-shadow: 0 0 4px 1px #7fb2f0; }
.sep { width: 8px; margin: 8px 4px 0; height: 26px; background: repeating-linear-gradient(#a5a5a5 0 2px, transparent 2px 5px); }

.callout { position: absolute; left: 197px; right: 8px; top: 297px; bottom: 63px; border: 3px solid #d01417; }
.arrow { position: absolute; left: 683px; top: 457px; overflow: visible; }
</style>
